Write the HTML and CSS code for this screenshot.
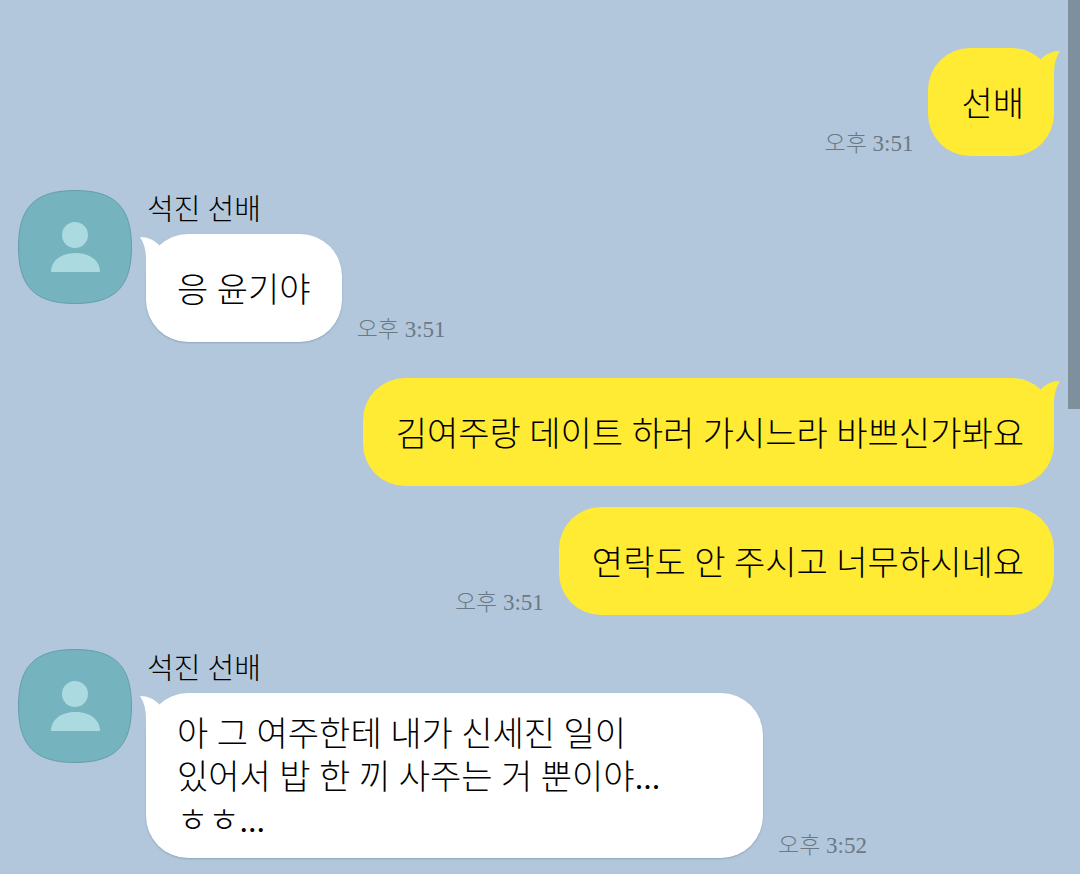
FILE: index.html
```html
<!DOCTYPE html>
<html lang="ko">
<head>
<meta charset="utf-8">
<meta name="viewport" content="width=device-width, initial-scale=1">
<title>석진 선배</title>
<link rel="stylesheet" href="styles.css">
</head>
<body>
<svg class="sprite" aria-hidden="true">
  <symbol id="avatar" viewBox="0 0 114 114">
    <path class="avatar-shape" d="M57 .5C97 .5 113.500 17 113.500 57S97 113.500 57 113.500.5 97 .5 57 17 .5 57 .5Z"/>
    <circle class="avatar-person" cx="57" cy="45" r="13"/>
    <path class="avatar-person" d="M33 82C33 70 44 63 57.500 63S82 70 82 82Z"/>
  </symbol>
  <symbol id="tail" viewBox="0 0 19 40">
    <path d="M0 0C8 0 14 3 19 8V39H6V22Q6 9 0 0Z"/>
  </symbol>
</svg>
<main class="chat">
  <section class="row row-sent">
    <time class="time">오후 3:51</time>
    <p class="bubble bubble-sent"><svg class="tail tail-sent" aria-hidden="true"><use href="#tail"/></svg>선배</p>
  </section>
  <section class="group">
    <svg class="avatar" role="img" aria-label="프로필"><use href="#avatar"/></svg>
    <div class="content">
      <h2 class="name">석진 선배</h2>
      <div class="row">
        <p class="bubble bubble-received"><svg class="tail tail-received" aria-hidden="true"><use href="#tail"/></svg>응 윤기야</p>
        <time class="time">오후 3:51</time>
      </div>
    </div>
  </section>
  <section class="stack">
    <div class="row row-sent">
      <p class="bubble bubble-sent"><svg class="tail tail-sent" aria-hidden="true"><use href="#tail"/></svg>김여주랑 데이트 하러 가시느라 바쁘신가봐요</p>
    </div>
    <div class="row row-sent">
      <time class="time">오후 3:51</time>
      <p class="bubble bubble-sent">연락도 안 주시고 너무하시네요</p>
    </div>
  </section>
  <section class="group">
    <svg class="avatar" role="img" aria-label="프로필"><use href="#avatar"/></svg>
    <div class="content">
      <h2 class="name">석진 선배</h2>
      <div class="row">
        <p class="bubble bubble-received bubble-wide"><svg class="tail tail-received" aria-hidden="true"><use href="#tail"/></svg><span>아 그 여주한테 내가 신세진 일이<br>있어서 밥 한 끼 사주는 거 뿐이야...<br>ㅎㅎ...</span></p>
        <time class="time">오후 3:52</time>
      </div>
    </div>
  </section>
</main>
<div class="scroll-thumb"></div>
</body>
</html>
```
FILE: styles.css
```css
* {
  box-sizing: border-box;
}

body {
  position: relative;
  min-height: 100vh;
  margin: 0;
  background: #b2c7db;
  color: #000;
  font-family: "Liberation Serif", "Noto Sans CJK KR Light", "Noto Sans CJK KR", serif;
  font-weight: 300;
}

.sprite {
  position: absolute;
  width: 0;
  height: 0;
}

.chat {
  display: flex;
  flex-direction: column;
  gap: 34px;
  padding: 48px 26px 16px 18px;
}

.row {
  display: flex;
  align-items: flex-end;
  gap: 15px;
}

.row-sent {
  justify-content: flex-end;
}

.stack {
  display: flex;
  flex-direction: column;
  gap: 21px;
  padding-top: 2px;
}

.group {
  display: flex;
  align-items: flex-start;
  gap: 14px;
}

.content {
  flex: 1;
  min-width: 0;
}

.avatar {
  flex: none;
  width: 114px;
  height: 114px;
}

.avatar-shape {
  fill: #75b3be;
  stroke: #659eac;
}

.avatar-person {
  fill: #abdae1;
}

.name {
  margin: 0;
  padding: 0 2px 4px 1px;
  font-size: 29px;
  font-weight: 300;
  line-height: 40px;
}

.bubble {
  position: relative;
  display: flex;
  align-items: center;
  min-height: 108px;
  margin: 0;
  padding: 20px 31px 16px;
  border-radius: 42px;
  font-size: 34px;
  line-height: 43px;
}

.bubble-sent {
  padding-left: 33px;
  padding-right: 30px;
  background: #ffea34;
}

.bubble-received {
  background: #fff;
  box-shadow: 0 1px 2px #8fa5ba;
}

.bubble-wide {
  flex: 0 1 617px;
}

.tail {
  position: absolute;
  top: 3px;
  width: 19px;
  height: 40px;
}

.tail-received {
  left: -6px;
  fill: #fff;
}

.tail-sent {
  right: -6px;
  fill: #ffea34;
  transform: scaleX(-1);
}

.time {
  flex: none;
  color: #6b7985;
  font-size: 23px;
  line-height: 24px;
}

.scroll-thumb {
  position: absolute;
  top: 0;
  right: 0;
  width: 12px;
  height: 409px;
  background: #7f909d;
}
```
